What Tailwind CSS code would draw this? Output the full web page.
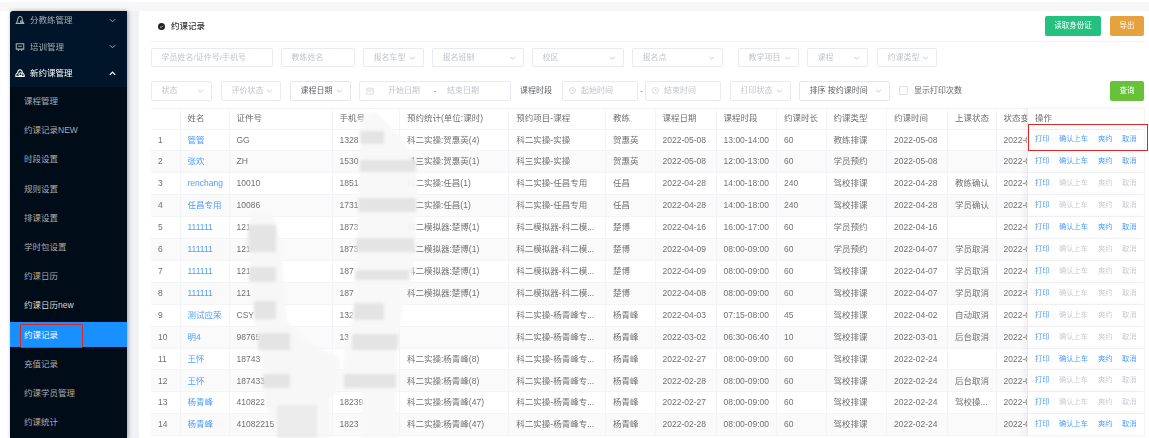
<!DOCTYPE html>
<html lang="zh">
<head>
    <meta charset="UTF-8">
    <meta name="viewport" content="width=device-width, initial-scale=1.0">
    <title>约课记录</title>
    <script src="https://cdn.jsdelivr.net/npm/@tailwindcss/browser@4"></script>
</head>
<body class="bg-white overflow-hidden">
<div class="relative w-[1149px] h-[438px] overflow-hidden flex flex-col blur-[0.5px] text-[8.5px] text-[#707070] font-['Liberation_Sans','Noto_Sans_CJK_SC',sans-serif]">
    <div class="h-[2px] shrink-0"></div>
    <div class="h-[9px] shrink-0 bg-[#f7f7f7]"></div>

    <div class="flex flex-1 min-h-0">
        <div class="w-[10px] shrink-0"></div>

        <!-- Sidebar -->
        <aside class="w-[117px] shrink-0 bg-[#001529] rounded-tl-[3px] text-[#a6adb4] shadow-[1px_0_4px_rgba(0,0,0,0.35)] z-10 flex flex-col">
            <div class="h-[26.6px] shrink-0 flex items-center pl-[5px] pr-[11px] -mt-[4px]">
                <svg class="w-[10px] h-[10px] mr-[5px]" viewBox="0 0 12 12" fill="none" stroke="currentColor" stroke-width="1.3"><path d="M1.5 10h9l-1.6-3.2c0-3-1.3-5-2.9-5s-2.9 2-2.9 5z"/><circle cx="7.8" cy="8" r="1.2"/></svg>
                <span class="flex-1">分教练管理</span>
                <svg class="w-[7px] h-[5px]" viewBox="0 0 8 5" fill="none" stroke="currentColor" stroke-width="1.1"><path d="M1 1l3 3 3-3"/></svg>
            </div>
            <div class="h-[26.6px] shrink-0 flex items-center pl-[5px] pr-[11px]">
                <svg class="w-[10px] h-[10px] mr-[5px]" viewBox="0 0 12 12" fill="none" stroke="currentColor" stroke-width="1.3"><path d="M1.5 2h9v6.5h-9z"/><path d="M4 8.5v2.3M8 8.5v2.3M3.8 5h4.4"/></svg>
                <span class="flex-1">培训管理</span>
                <svg class="w-[7px] h-[5px]" viewBox="0 0 8 5" fill="none" stroke="currentColor" stroke-width="1.1"><path d="M1 1l3 3 3-3"/></svg>
            </div>
            <div class="h-[26.6px] shrink-0 flex items-center pl-[5px] pr-[11px] text-white">
                <svg class="w-[10px] h-[10px] mr-[5px]" viewBox="0 0 12 12" fill="none" stroke="currentColor" stroke-width="1.3"><path d="M1 10c-.3-2 .6-3.5 2-4 .3-2.400 1.500-4 3-4s2.700 1.600 3 4c1.400.5 2.300 2 2 4z"/><circle cx="6.500" cy="7.500" r="1.800"/></svg>
                <span class="flex-1">新约课管理</span>
                <svg class="w-[7px] h-[5px]" viewBox="0 0 8 5" fill="none" stroke="currentColor" stroke-width="1.4"><path d="M1 4l3-3 3 3"/></svg>
            </div>
            <nav class="flex-1 bg-[#000c17] pt-[2px]">
                <a class="h-[25.200px] mb-[4px] flex items-center pl-[14px]">课程管理</a>
                <a class="h-[25.200px] mb-[4px] flex items-center pl-[14px]">约课记录NEW</a>
                <a class="h-[25.200px] mb-[4px] flex items-center pl-[14px]">时段设置</a>
                <a class="h-[25.200px] mb-[4px] flex items-center pl-[14px]">规则设置</a>
                <a class="h-[25.200px] mb-[4px] flex items-center pl-[14px]">排课设置</a>
                <a class="h-[25.200px] mb-[4px] flex items-center pl-[14px]">学时包设置</a>
                <a class="h-[25.200px] mb-[4px] flex items-center pl-[14px]">约课日历</a>
                <a class="h-[25.200px] mb-[4px] flex items-center pl-[14px] text-[#d5d8db]">约课日历new</a>
                <a class="h-[25.200px] mb-[4px] flex items-center pl-[14px] bg-[#1890ff] text-white">约课记录</a>
                <a class="h-[25.200px] mb-[4px] flex items-center pl-[14px]">充值记录</a>
                <a class="h-[25.200px] mb-[4px] flex items-center pl-[14px]">约课学员管理</a>
                <a class="h-[25.200px] mb-[4px] flex items-center pl-[14px]">约课统计</a>
            </nav>
        </aside>

        <div class="w-[12px] shrink-0 bg-[#f0f2f5]"></div>

        <!-- Content -->
        <main class="flex-1 min-w-0 pl-[12px] pr-[4px]">
            <header class="h-[31px] flex items-center border-b border-[#eef0f4] pr-px">
                <svg class="w-[7px] h-[7px] ml-[7px] mr-[6px]" viewBox="0 0 10 10"><circle cx="5" cy="5" r="5" fill="#222"/><path d="M2.800 5.200l1.600 1.500 2.800-3" fill="none" stroke="#fff" stroke-width="1"/></svg>
                <h1 class="font-medium text-[#333]">约课记录</h1>
                <button class="ml-auto w-[56px] h-[20px] rounded-[2px] bg-[#23c07f] text-white text-[7.500px]">读取身份证</button>
                <button class="ml-[9px] w-[34px] h-[20px] rounded-[2px] bg-[#e6a23c] text-white text-[7.500px]">导出</button>
            </header>

            <!-- Filters -->
            <div class="flex items-center mt-[6px] h-[19px] text-[8px] text-[#c0c4cc] *:h-full *:shrink-0 *:flex *:items-center *:justify-between *:border *:border-[#e8eaef] *:rounded-[2px] *:pl-[9.500px] *:pr-[7px]">
                <div class="w-[122px]">学员姓名/证件号/手机号</div>
                <div class="w-[74px] ml-[8px]">教练姓名</div>
                <div class="w-[61px] ml-[8px]">报名车型<svg class="w-[7px] h-[4px]" viewBox="0 0 8 5" fill="none" stroke="#b8bcc4"><path d="M1 1l3 3 3-3"/></svg></div>
                <div class="w-[92px] ml-[8px]">报名班制<svg class="w-[7px] h-[4px]" viewBox="0 0 8 5" fill="none" stroke="#b8bcc4"><path d="M1 1l3 3 3-3"/></svg></div>
                <div class="w-[92px] ml-[8px]">校区<svg class="w-[7px] h-[4px]" viewBox="0 0 8 5" fill="none" stroke="#b8bcc4"><path d="M1 1l3 3 3-3"/></svg></div>
                <div class="w-[91px] ml-[8px]">报名点<svg class="w-[7px] h-[4px]" viewBox="0 0 8 5" fill="none" stroke="#b8bcc4"><path d="M1 1l3 3 3-3"/></svg></div>
                <div class="w-[61px] ml-[15px]">教学项目<svg class="w-[7px] h-[4px]" viewBox="0 0 8 5" fill="none" stroke="#b8bcc4"><path d="M1 1l3 3 3-3"/></svg></div>
                <div class="w-[61px] ml-[8px]">课程<svg class="w-[7px] h-[4px]" viewBox="0 0 8 5" fill="none" stroke="#b8bcc4"><path d="M1 1l3 3 3-3"/></svg></div>
                <div class="w-[60px] ml-[9px]">约课类型<svg class="w-[7px] h-[4px]" viewBox="0 0 8 5" fill="none" stroke="#b8bcc4"><path d="M1 1l3 3 3-3"/></svg></div>
            </div>

            <div class="flex items-center mt-[14px] h-[19.500px] text-[8px] text-[#c0c4cc]">
                <div class="w-[61px] h-full flex items-center justify-between border border-[#e8eaef] rounded-[2px] pl-[9.500px] pr-[7px]">状态<svg class="w-[7px] h-[4px]" viewBox="0 0 8 5" fill="none" stroke="#b8bcc4"><path d="M1 1l3 3 3-3"/></svg></div>
                <div class="w-[60px] ml-[9px] h-full flex items-center justify-between border border-[#e8eaef] rounded-[2px] pl-[9.500px] pr-[7px]">评价状态<svg class="w-[7px] h-[4px]" viewBox="0 0 8 5" fill="none" stroke="#b8bcc4"><path d="M1 1l3 3 3-3"/></svg></div>
                <div class="w-[61px] ml-[9px] h-full flex items-center justify-between border border-[#e4e6eb] rounded-[2px] pl-[9.500px] pr-[7px] text-[#606266]">课程日期<svg class="w-[7px] h-[4px]" viewBox="0 0 8 5" fill="none" stroke="#b8bcc4"><path d="M1 1l3 3 3-3"/></svg></div>
                <div class="w-[152px] ml-[8px] h-full flex items-center border border-[#e8eaef] rounded-[2px] pl-[6px]">
                    <svg class="w-[8px] h-[8px]" viewBox="0 0 10 10" fill="none" stroke="#c8ccd3" stroke-width="0.800"><path d="M1 1.500h8v7.500h-8zM1 3.800h8M3 6h4"/></svg>
                    <span class="w-[49px] ml-[6px] pl-[8px]">开始日期</span>
                    <span class="w-[12px] text-center text-[#606266]">-</span>
                    <span class="ml-[2px] pl-[4px]">结束日期</span>
                </div>
                <label class="ml-[9px] w-[34px] text-[#606266] whitespace-nowrap">课程时段</label>
                <div class="w-[76px] ml-[8px] h-full flex items-center border border-[#e8eaef] rounded-[2px] pl-[6px]">
                    <svg class="w-[7px] h-[7px] mr-[5px]" viewBox="0 0 10 10" fill="none" stroke="#c8ccd3"><circle cx="5" cy="5" r="4.300"/><path d="M5 2.500v2.700h2"/></svg>起始时间
                </div>
                <span class="w-[7px] text-center text-[#606266]">-</span>
                <div class="w-[76px] h-full flex items-center border border-[#e8eaef] rounded-[2px] pl-[6px]">
                    <svg class="w-[7px] h-[7px] mr-[5px]" viewBox="0 0 10 10" fill="none" stroke="#c8ccd3"><circle cx="5" cy="5" r="4.300"/><path d="M5 2.500v2.700h2"/></svg>结束时间
                </div>
                <div class="w-[61px] ml-[9px] h-full flex items-center justify-between border border-[#e8eaef] rounded-[2px] pl-[9.500px] pr-[7px]">打印状态<svg class="w-[7px] h-[4px]" viewBox="0 0 8 5" fill="none" stroke="#b8bcc4"><path d="M1 1l3 3 3-3"/></svg></div>
                <div class="w-[91px] ml-[8px] h-full flex items-center justify-between border border-[#e4e6eb] rounded-[2px] pl-[9.500px] pr-[7px] text-[#606266]">排序 按约课时间<svg class="w-[7px] h-[4px]" viewBox="0 0 8 5" fill="none" stroke="#b8bcc4"><path d="M1 1l3 3 3-3"/></svg></div>
                <span class="ml-[9px] w-[9px] h-[9px] border border-[#dcdfe6] rounded-[1px]"></span>
                <span class="ml-[6px] text-[#606266]">显示打印次数</span>
                <button class="ml-auto mr-px w-[34px] h-[20px] rounded-[2px] bg-[#67c23a] text-white text-[7.500px]">查询</button>
            </div>

            <!-- Table -->
            <table class="mt-[7.500px] w-[994px] table-fixed border-separate border-spacing-0">
                <colgroup>
                    <col class="w-[29.500px]"><col class="w-[49px]"><col class="w-[103px]"><col class="w-[67.500px]"><col class="w-[109.300px]"><col class="w-[96.700px]"><col class="w-[49.600px]"><col class="w-[61px]"><col class="w-[60.400px]"><col class="w-[49.600px]"><col class="w-[60.400px]"><col class="w-[61px]"><col class="w-[48.600px]"><col class="w-[31.400px]"><col class="w-[117px]">
                </colgroup>
                <thead>
                    <tr id="head" class="h-[21.500px] text-left"></tr>
                </thead>
                <tbody id="rows"></tbody>
            </table>
        </main>
    </div>

    <!-- Mosaic covering the private numbers -->
    <svg class="absolute left-0 top-0 pointer-events-none blur-[1.5px]" width="1149" height="438" viewBox="0 0 1149 438">
        <path d="M361 122C364 116 370 112 376 113 384 118 390 128 400 136 408 146 414 160 417 178L416 250C414 270 408 290 402 310L397 345 396 395 397 438 361 438 362 392 340 388 345 350 350 330 356 280 358 200 360 150Z" fill="#f8f8f9" fill-opacity="0.95"/>
        <path d="M248 228C248 218 254 213 262 213 270 213 276 218 278 228L283 270 287 320 302 340 340 358 338 388 330 400 330 438 278 438 274 424 264 400 262 360 258 340 254 320 250 280Z" fill="#f7f7f8" fill-opacity="0.95"/>
        <g fill="#e4e4e5">
            <rect x="360" y="131" width="24" height="13"/>
            <rect x="360" y="160" width="56" height="12"/>
            <rect x="358" y="198" width="58" height="14"/>
            <rect x="356" y="238" width="58" height="14"/>
            <rect x="355" y="270" width="54" height="10"/>
            <rect x="354" y="303" width="30" height="17"/>
            <rect x="352" y="334" width="46" height="16"/>
            <rect x="344" y="374" width="52" height="14"/>
            <rect x="248" y="225" width="28" height="27"/>
            <rect x="249" y="267" width="27" height="15"/>
            <rect x="254" y="301" width="22" height="18"/>
            <rect x="258" y="333" width="32" height="17"/>
            <rect x="263" y="374" width="27" height="14"/>
        </g>
        <rect x="277" y="405" width="40" height="33" fill="#ebebec"/>
    </svg>

    <!-- Red annotation boxes -->
    <div class="absolute z-20 left-[20px] top-[324px] w-[63px] h-[24px] border-[1.500px] border-[#e02828] rounded-[1px]"></div>
    <div class="absolute z-20 left-[1028px] top-[124px] w-[120px] h-[27px] border-[1.500px] border-[#e02828]"></div>
</div>

<script>
    const heads = ['', '姓名', '证件号', '手机号', '预约统计(单位:课时)', '预约项目-课程', '教练', '课程日期', '课程时段', '约课时长', '约课类型', '约课时间', '上课状态', '状态变', '操作'];

    // 序号 姓名 证件号 手机号 统计 项目 教练 日期 时段 时长 类型 约课时间 上课状态 能否操作
    const data = [
        ['1', '管管', 'GG', '1328', '科二实操:贺惠英(4)', '科二实操-实操', '贺惠英', '2022-05-08', '13:00-14:00', '60', '教练排课', '2022-05-08', '', 1],
        ['2', '张欢', 'ZH', '1530', '科三实操:贺惠英(1)', '科三实操-实操', '贺惠英', '2022-05-08', '12:00-13:00', '60', '学员预约', '2022-05-08', '', 1],
        ['3', 'renchang', '10010', '1851', '科二实操:任昌(1)', '科二实操-任昌专用', '任昌', '2022-04-28', '14:00-18:00', '240', '驾校排课', '2022-04-28', '教练确认', 0],
        ['4', '任昌专用', '10086', '1731', '科二实操:任昌(1)', '科二实操-任昌专用', '任昌', '2022-04-28', '14:00-18:00', '240', '驾校排课', '2022-04-28', '学员确认', 0],
        ['5', '111111', '121', '1873', '科二模拟器:楚博(1)', '科二模拟器-科二模...', '楚博', '2022-04-16', '16:00-17:00', '60', '学员预约', '2022-04-16', '', 1],
        ['6', '111111', '121', '1873', '科二模拟器:楚博(1)', '科二模拟器-科二模...', '楚博', '2022-04-09', '08:00-09:00', '60', '学员预约', '2022-04-07', '学员取消', 0],
        ['7', '111111', '121', '187', '科二模拟器:楚博(1)', '科二模拟器-科二模...', '楚博', '2022-04-09', '08:00-09:00', '60', '驾校排课', '2022-04-07', '学员取消', 0],
        ['8', '111111', '121', '187', '科二模拟器:楚博(1)', '科二模拟器-科二模...', '楚博', '2022-04-08', '08:00-09:00', '60', '驾校排课', '2022-04-07', '学员取消', 0],
        ['9', '测试应荣', 'CSY', '132', '', '科二实操-杨青峰专...', '杨青峰', '2022-04-03', '07:15-08:00', '45', '驾校排课', '2022-04-02', '自动取消', 0],
        ['10', '明4', '98765', '13', '', '科二实操-杨青峰专...', '杨青峰', '2022-03-02', '06:30-06:40', '10', '驾校排课', '2022-03-01', '后台取消', 0],
        ['11', '王怀', '18743', '', '科二实操:杨青峰(8)', '科二实操-杨青峰专...', '杨青峰', '2022-02-27', '08:00-09:00', '60', '驾校排课', '2022-02-24', '', 1],
        ['12', '王怀', '187433', '', '科二实操:杨青峰(8)', '科二实操-杨青峰专...', '杨青峰', '2022-02-28', '08:00-09:00', '60', '驾校排课', '2022-02-24', '后台取消', 0],
        ['13', '杨青峰', '410822', '18239', '科二实操:杨青峰(47)', '科二实操-杨青峰专...', '杨青峰', '2022-02-27', '08:00-09:00', '60', '驾校排课', '2022-02-24', '驾校操...', 0],
        ['14', '杨青峰', '41082215', '1823', '科二实操:杨青峰(47)', '科二实操-杨青峰专...', '杨青峰', '2022-02-28', '08:00-09:00', '60', '驾校排课', '2022-02-24', '', 1]
    ];

    const cell = 'pl-[7px] overflow-hidden whitespace-nowrap font-normal border-r border-b border-[#f3f4f8]';
    const opShadow = 'bg-white shadow-[-4px_0_5px_rgba(0,0,0,0.05)] relative';

    document.getElementById('head').innerHTML = heads.map((h, i) =>
        `<th class="${cell} border-t ${i === 14 ? opShadow : ''}">${h}</th>`).join('');

    document.getElementById('rows').innerHTML = data.map((row, r) => {
        const bg = r % 2 ? 'bg-[#fafafa]' : 'bg-white';
        const tds = row.slice(0, 13).map((v, i) =>
            `<td class="${cell} ${i === 1 ? 'text-[#4d9dfb]' : ''}">${v}</td>`).join('');
        const on = row[13] ? 'text-[#4d9dfb]' : 'text-[#c9cbd0]';
        return `<tr class="h-[21.920px] ${bg}">${tds}
            <td class="${cell}">2022-0</td>
            <td class="${cell} ${opShadow} ${r % 2 ? 'bg-[#fafafa]' : ''} text-[7.300px]">
                <div class="flex"><a class="text-[#4d9dfb] w-[24px]">打印</a><a class="${on} w-[39px]">确认上车</a><a class="${on} w-[24px]">爽约</a><a class="${on}">取消</a></div>
            </td></tr>`;
    }).join('');
</script>
</body>
</html>
